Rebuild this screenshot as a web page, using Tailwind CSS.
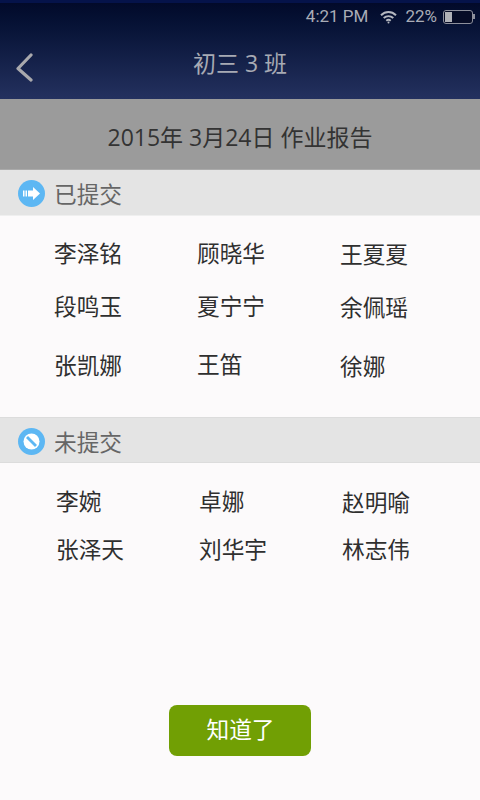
<!DOCTYPE html>
<html lang="zh">
<head>
    <meta charset="UTF-8">
    <script src="https://cdn.jsdelivr.net/npm/@tailwindcss/browser@4"></script>
    <title>作业报告</title>
</head>
<body class="bg-[#fcfafb] font-['Open_Sans','Noto_Sans_CJK_SC',sans-serif]">
<div class="w-[480px] h-[800px] overflow-hidden flex flex-col">
    <!-- status bar + title -->
    <header class="h-[99px] shrink-0 bg-gradient-to-b from-[#020a2a] to-[#24315f] border-t-[3px] border-[#05134a]">
        <div class="h-[27px] flex justify-end items-center pr-[5px] text-[#a9acb6] font-['Roboto','Noto_Sans',sans-serif]">
            <span class="text-[17px]">4:21 PM</span>
            <svg class="ml-[12px]" width="17" height="14" viewBox="0 0 17 14" fill="none" stroke="#b5b8c0" stroke-width="2">
                <path d="M1 5.2C5.5 1 11.500 1 16 5.200"/>
                <path d="M3.700 8C6.500 5.500 10.500 5.500 13.300 8"/>
                <path d="M6.300 10.700C7.500 9.700 9.500 9.700 10.700 10.700"/>
                <circle cx="8.500" cy="12.600" r="1" fill="#b5b8c0" stroke="none"/>
            </svg>
            <span class="ml-[8px] text-[17px]">22%</span>
            <div class="ml-[6px] flex items-center">
                <div class="w-[30px] h-[14px] rounded-[3px] border border-[#8d909c] bg-[#060c26] p-[1px]">
                    <div class="w-[7px] h-full bg-[#b0b2b8]"></div>
                </div>
                <div class="w-[2px] h-[5px] bg-[#8d909c]"></div>
            </div>
        </div>
        <div class="relative h-[69px] flex justify-center items-start pt-[18px]">
            <svg class="absolute left-[15px] top-[22px]" width="19" height="30" viewBox="0 0 19 30" fill="none" stroke="#a9a9ad" stroke-width="3.200" stroke-linecap="round" stroke-linejoin="round">
                <path d="M16 3L3 16.500L16 28"/>
            </svg>
            <h1 class="text-[23px] leading-[30px] text-[#a7aab4]">初三 3 班</h1>
        </div>
    </header>

    <div class="h-[71px] shrink-0 bg-[#9b9b9b] flex justify-center items-center pt-[7px] border-b border-[#aaaaaa]">
        <span class="text-[23px] text-[#333333]">2015年 3月24日 作业报告</span>
    </div>

    <!-- submitted -->
    <div class="h-[46px] shrink-0 bg-[#e4e4e4] flex items-center pl-[18px] pt-[2px] border-b border-[#efefef]">
        <div class="w-[27px] h-[27px] rounded-full bg-[#5db7f3] flex items-center justify-center">
            <svg width="17" height="13" viewBox="0 0 17 13" fill="#ffffff">
                <rect x="0" y="3.500" width="1.500" height="6"/>
                <rect x="2.500" y="3.500" width="1.500" height="6"/>
                <path d="M5 3.500H10V0L17 6.500L10 13V9.500H5Z"/>
            </svg>
        </div>
        <span class="ml-[9px] pt-[4px] text-[22.7px] text-[#666666]">已提交</span>
    </div>
    <div class="h-[201px] shrink-0 pl-[54px] pt-[22px] text-[22.7px] leading-[32px] text-[#2f2f2f]">
        <div class="grid grid-cols-[143px_143px_143px]">
            <span class="mt-[0px]">李泽铭</span><span class="mt-[0px]">顾晓华</span><span class="mt-[1px]">王夏夏</span>
        </div>
        <div class="grid grid-cols-[143px_143px_143px] mt-[19px]">
            <span class="mt-[1px]">段鸣玉</span><span class="mt-[1px]">夏宁宁</span><span class="mt-[2px]">余佩瑶</span>
        </div>
        <div class="grid grid-cols-[143px_143px_143px] mt-[25px]">
            <span class="mt-[1px]">张凯娜</span><span class="mt-[0px]">王笛</span><span class="mt-[2px]">徐娜</span>
        </div>
    </div>

    <!-- not submitted -->
    <div class="h-[46px] shrink-0 bg-[#e4e4e4] flex items-center pl-[18px] pt-[2px] border-y border-[#dcdcdc]">
        <div class="w-[27px] h-[27px] rounded-full bg-[#5db7f3] flex items-center justify-center">
            <svg width="17" height="17" viewBox="0 0 17 17">
                <circle cx="8.500" cy="8.500" r="8" fill="#ffffff"/>
                <path d="M3 5L5 3L14 12L12 14Z" fill="#5db7f3"/>
            </svg>
        </div>
        <span class="ml-[9px] pt-[4px] text-[22.7px] text-[#666666]">未提交</span>
    </div>
    <div class="pl-[56px] pt-[23px] text-[22.7px] leading-[32px] text-[#2f2f2f]">
        <div class="grid grid-cols-[143px_143px_143px]">
            <span>李婉</span><span>卓娜</span><span class="mt-[1px]">赵明喻</span>
        </div>
        <div class="grid grid-cols-[143px_143px_143px] mt-[15px]">
            <span>张泽天</span><span>刘华宇</span><span>林志伟</span>
        </div>
    </div>

    <div class="flex justify-center mt-auto mb-[44px]">
        <button class="w-[142px] h-[51px] rounded-[8px] bg-[#719f04] text-white text-[22.7px] pl-[1px]">知道了</button>
    </div>
</div>
</body>
</html>
